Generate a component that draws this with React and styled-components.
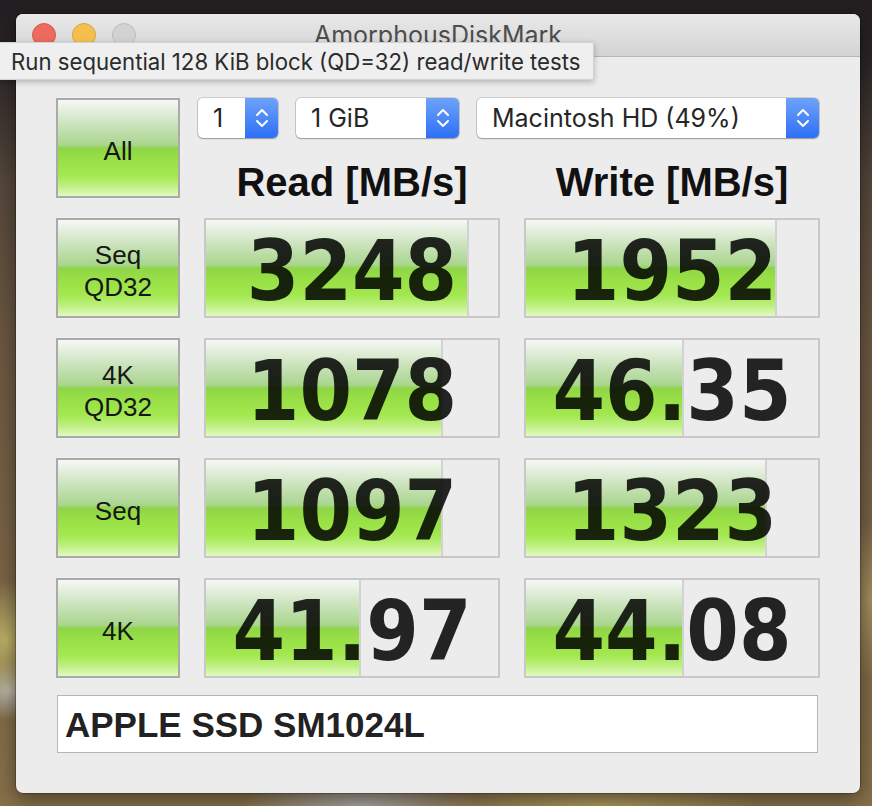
import React from "react";
import styled, { createGlobalStyle } from "styled-components";

const Global = createGlobalStyle`
  html, body { margin: 0; padding: 0; }
  body {
    width: 872px;
    height: 806px;
    overflow: hidden;
    font-family: Inter, "Liberation Sans", sans-serif;
    background:
      radial-gradient(ellipse 40px 60px at 6px 640px, rgba(200,190,110,0.85), rgba(200,190,110,0) 100%),
      radial-gradient(ellipse 30px 30px at 8px 690px, rgba(190,190,185,0.9), rgba(190,190,185,0) 100%),
      radial-gradient(ellipse 120px 40px at 360px 806px, rgba(170,170,170,0.9), rgba(170,170,170,0) 100%),
      radial-gradient(ellipse 160px 30px at 600px 806px, rgba(190,170,100,0.7), rgba(190,170,100,0) 100%),
      radial-gradient(ellipse 30px 80px at 870px 600px, rgba(190,170,110,0.6), rgba(190,170,110,0) 100%),
      linear-gradient(to bottom, #221e21 0px, #2a2526 60px, #54463a 180px, #6a5641 340px, #7a6546 600px, #86704a 806px);
  }
`;

const Desktop = styled.div`
  position: relative;
  width: 872px;
  height: 806px;
  box-sizing: border-box;
  padding: 14px 0 0 16px;
`;

const Window = styled.div`
  width: 844px;
  height: 779px;
  border-radius: 7px;
  background: #ececec;
  overflow: hidden;
  box-shadow: 0 0 0 0.5px rgba(0,0,0,0.45), 0 6px 20px rgba(0,0,0,0.45);
  display: flex;
  flex-direction: column;
`;

const TitleBar = styled.div`
  position: relative;
  height: 43px;
  box-sizing: border-box;
  flex: none;
  border-bottom: 1px solid #b6b6b6;
  background: linear-gradient(to bottom, #e9e9e9, #d4d4d4);
  display: flex;
  align-items: center;
  padding-left: 16px;
  gap: 16px;
`;

const Light = styled.span`
  width: 24px;
  height: 24px;
  border-radius: 50%;
  box-sizing: border-box;
  background: ${p => p.$fill};
  border: 1px solid ${p => p.$edge};
  flex: none;
`;

const Title = styled.div`
  position: absolute;
  left: 0;
  right: 0;
  top: 0;
  bottom: 0;
  display: flex;
  align-items: center;
  justify-content: center;
  font-size: 25px;
  color: #4d4d4d;
  pointer-events: none;
`;

const Tooltip = styled.div`
  position: absolute;
  left: -2px;
  top: 42px;
  height: 38px;
  width: 596px;
  box-sizing: border-box;
  padding-left: 12px;
  display: flex;
  align-items: center;
  background: #efefef;
  border: 1px solid rgba(0,0,0,0.12);
  box-shadow: 0 2px 6px rgba(0,0,0,0.25);
  font-size: 22.2px;
  color: #2b2b2b;
  white-space: nowrap;
  z-index: 5;
`;

const Body = styled.div`
  padding: 41px 40px 40px 40px;
  display: flex;
  flex-direction: column;
`;

const Grid = styled.div`
  display: grid;
  grid-template-columns: 124px 296px 296px;
  column-gap: 24px;
  row-gap: 20px;
  grid-auto-rows: 100px;
`;

const greenFill = `linear-gradient(to bottom,
  #f6f8f4 0%, #e2eedb 12%, #c4e0b2 30%, #a9d58e 47%, #8fd548 50%, #98e046 62%, #a2e84e 78%, #c0f084 90%, #e2fbc0 100%)`;

const LabelButton = styled.div`
  box-sizing: border-box;
  border: 2px solid #aaaaaa;
  background: ${greenFill};
  display: flex;
  align-items: center;
  justify-content: center;
  text-align: center;
  padding-top: 5px;
  font-family: "Liberation Sans", Arial, sans-serif;
  font-size: 26px;
  line-height: 32px;
  color: #161616;
`;

const TopPanel = styled.div`
  grid-column: 2 / span 2;
  display: flex;
  flex-direction: column;
`;

const SelectRow = styled.div`
  display: flex;
  gap: 18px;
  margin-left: -6px;
  height: 40px;
`;

const Select = styled.div`
  width: ${p => p.$w}px;
  height: 40px;
  box-sizing: border-box;
  border-radius: 5px;
  background: #fff;
  box-shadow: 0 0 0 1px rgba(0,0,0,0.13), 0 1px 1.5px rgba(0,0,0,0.25);
  display: flex;
  align-items: center;
  overflow: hidden;
  font-size: 25px;
  color: #262626;
`;

const SelectText = styled.span`
  flex: 1;
  padding-left: 15px;
  white-space: nowrap;
`;

const Stepper = styled.span`
  width: 33px;
  height: 100%;
  flex: none;
  background: linear-gradient(to bottom, #6ea3f9, #2e6ff6);
  display: flex;
  align-items: center;
  justify-content: center;
`;

const HeaderRow = styled.div`
  display: grid;
  grid-template-columns: 296px 296px;
  column-gap: 24px;
  margin-top: 24px;
`;

const Header = styled.div`
  text-align: center;
  font-family: "Liberation Sans", Arial, sans-serif;
  font-weight: 700;
  font-size: 40px;
  line-height: 40px;
  color: #111;
  white-space: nowrap;
`;

const Cell = styled.div`
  position: relative;
  box-sizing: border-box;
  border: 2px solid #c8c8c8;
  background: #ececec;
`;

const Bar = styled.div`
  position: absolute;
  left: 0;
  top: 0;
  bottom: 0;
  box-sizing: border-box;
  border-right: 2px solid #d2d2d2;
  background: ${greenFill};
`;

const Value = styled.div`
  position: relative;
  height: 100%;
  display: flex;
  align-items: center;
  justify-content: center;
  padding-top: 6px;
  box-sizing: border-box;
  font-family: "DejaVu Sans Condensed", "DejaVu Sans", sans-serif;
  font-stretch: condensed;
  font-weight: 700;
  font-size: 84px;
  line-height: 84px;
  color: rgba(0,0,0,0.85);
  white-space: nowrap;
`;

const DeviceField = styled.div`
  margin: 17px 2px 0 1px;
  height: 58px;
  box-sizing: border-box;
  border: 1px solid #b5b5b5;
  background: #fff;
  display: flex;
  align-items: center;
  padding-left: 7px;
  padding-top: 2px;
  font-family: "Liberation Sans", Arial, sans-serif;
  font-weight: 700;
  font-size: 35px;
  color: #222;
`;

const Chevrons = () => (
  <svg width="16" height="24" viewBox="0 0 16 24" fill="none" stroke="#fff" strokeWidth="2" strokeLinecap="round" strokeLinejoin="round">
    <path d="M3 9 L8 4 L13 9" />
    <path d="M3 15 L8 20 L13 15" />
  </svg>
);

const rows = [
  { label: ["Seq", "QD32"], read: "3248", rf: 0.9, write: "1952", wf: 0.86 },
  { label: ["4K", "QD32"], read: "1078", rf: 0.81, write: "46.35", wf: 0.54 },
  { label: ["Seq"], read: "1097", rf: 0.81, write: "1323", wf: 0.825 },
  { label: ["4K"], read: "41.97", rf: 0.53, write: "44.08", wf: 0.54 },
];

const Result = ({ value, frac }) => (
  <Cell>
    <Bar style={{ width: `${frac * 100}%` }} />
    <Value>{value}</Value>
  </Cell>
);

export default function App() {
  return (
    <>
      <Global />
      <Desktop>
        <Window>
          <TitleBar>
            <Light $fill="#ed6a5e" $edge="#d65a4f" />
            <Light $fill="#f5bf4f" $edge="#d9a53d" />
            <Light $fill="#d3d2d2" $edge="#bdbcbc" />
            <Title>AmorphousDiskMark</Title>
          </TitleBar>
          <Body>
            <Grid>
              <LabelButton>All</LabelButton>
              <TopPanel>
                <SelectRow>
                  <Select $w={80}>
                    <SelectText>1</SelectText>
                    <Stepper><Chevrons /></Stepper>
                  </Select>
                  <Select $w={163}>
                    <SelectText>1 GiB</SelectText>
                    <Stepper><Chevrons /></Stepper>
                  </Select>
                  <Select $w={342}>
                    <SelectText>Macintosh HD (49%)</SelectText>
                    <Stepper><Chevrons /></Stepper>
                  </Select>
                </SelectRow>
                <HeaderRow>
                  <Header>Read [MB/s]</Header>
                  <Header>Write [MB/s]</Header>
                </HeaderRow>
              </TopPanel>
              {rows.map((r, i) => (
                <React.Fragment key={i}>
                  <LabelButton>
                    <div>
                      {r.label.map((l, j) => (
                        <div key={j}>{l}</div>
                      ))}
                    </div>
                  </LabelButton>
                  <Result value={r.read} frac={r.rf} />
                  <Result value={r.write} frac={r.wf} />
                </React.Fragment>
              ))}
            </Grid>
            <DeviceField>APPLE SSD SM1024L</DeviceField>
          </Body>
        </Window>
        <Tooltip>Run sequential 128 KiB block (QD=32) read/write tests</Tooltip>
      </Desktop>
    </>
  );
}
